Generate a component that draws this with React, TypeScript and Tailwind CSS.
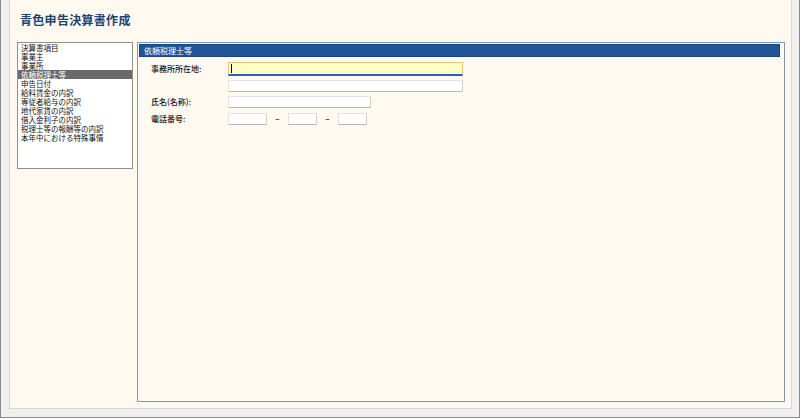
import React from "react";

const items = [
  "決算書項目",
  "事業主",
  "事業所",
  "依頼税理士等",
  "申告日付",
  "給料賃金の内訳",
  "専従者給与の内訳",
  "地代家賃の内訳",
  "借入金利子の内訳",
  "税理士等の報酬等の内訳",
  "本年中における特殊事情",
];

const font = { fontFamily: '"Noto Sans CJK JP", "Noto Sans", sans-serif' };

function Box({ w, focused }: { w: string; focused?: boolean }) {
  if (focused) {
    return (
      <div className={`${w} h-[14px] bg-[#ffffc4] border border-[#ecc46a] border-b-2 border-b-[#2f5fb8] flex items-center pl-[2px]`}>
        <div className="w-px h-[9px] bg-black" />
      </div>
    );
  }
  return (
    <div className={`${w} h-[12px] bg-white border border-[#e2e2e2] border-b-[#b8b8b8] border-r-[#cfcfcf]`} />
  );
}

export default function App() {
  return (
    <div
      className="w-[800px] h-[418px] bg-[#f0f0f0] border-x border-b border-[#8a8a8a] pl-[8px] pr-[7px] pb-[8px] flex flex-col"
      style={font}
    >
      <div className="flex-1 bg-[#fff9f0] border-x border-b border-[#d6d6d6] flex flex-col pl-[7px] pr-[6px] pb-[6px]">
        <div className="pt-[12px] pl-[3px] h-[42px] text-[12px] leading-[16px] font-bold text-[#1d4373] tracking-[0.3px]">
          青色申告決算書作成
        </div>
        <div className="flex-1 flex gap-[4px]">
          <div className="w-[116px] h-[127px] bg-white border border-[#8d9196] overflow-hidden">
            {items.map((t, i) => (
              <div
                key={t}
                className={`h-[9px] text-[7.5px] leading-[9px] pl-[3px] whitespace-nowrap overflow-hidden ${
                  i === 3 ? "bg-[#6a6a6a] text-white" : "text-[#111]"
                }`}
              >
                {t}
              </div>
            ))}
          </div>
          <div className="flex-1 border border-[#7f9ab8] flex flex-col pt-[1px] pl-[1px] pr-[4px]">
            <div className="h-[13px] bg-[#22549a] border border-[#1b447f] text-white text-[8px] leading-[11px] pl-[4px]">
              依頼税理士等
            </div>
            <div className="pl-[12px] pt-[5px] flex flex-col text-[8px] leading-[10px] text-[#1a1a1a] font-medium">
              <div className="flex items-center h-[14px]">
                <div className="w-[77px]">事務所所在地:</div>
                <Box w="w-[235px]" focused />
              </div>
              <div className="flex items-center h-[12px] mt-[4px]">
                <div className="w-[77px]" />
                <Box w="w-[235px]" />
              </div>
              <div className="flex items-center h-[12px] mt-[4px]">
                <div className="w-[77px]">氏名(名称):</div>
                <Box w="w-[143px]" />
              </div>
              <div className="flex items-center h-[12px] mt-[5px]">
                <div className="w-[77px]">電話番号:</div>
                <Box w="w-[39px]" />
                <div className="w-[21px] text-center text-[#333] font-bold">–</div>
                <Box w="w-[29px]" />
                <div className="w-[21px] text-center text-[#333] font-bold">–</div>
                <Box w="w-[29px]" />
              </div>
            </div>
          </div>
        </div>
      </div>
    </div>
  );
}
